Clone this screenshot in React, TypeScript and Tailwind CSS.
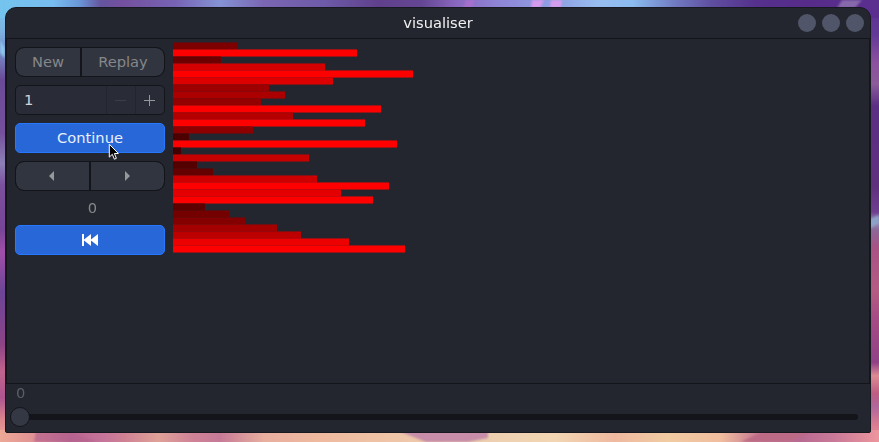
import React from "react";

const VALUES = [
  8, 23, 6, 19, 30, 20, 12, 14, 11, 26, 15, 24, 10, 2, 28, 1, 17, 3, 5, 18, 27,
  21, 25, 4, 7, 9, 13, 16, 22, 29,
];

const UNIT = 8;
const PITCH = 7;

function barColor(value: number) {
  const red = value > 22 ? 255 : 60 + value * 8;
  return `rgb(${red},0,0)`;
}

function BarChart() {
  return (
    <svg width="696" height="344" className="block">
      {VALUES.map((value, i) => (
        <rect
          key={value}
          x={0}
          y={3.45 + i * PITCH}
          width={value * UNIT}
          height={PITCH + 0.1}
          fill={barColor(value)}
        />
      ))}
    </svg>
  );
}

type Stop = [number, string];

function Gradient({ id, stops, vertical }: { id: string; stops: Stop[]; vertical?: boolean }) {
  return (
    <linearGradient id={id} x1="0" y1="0" x2={vertical ? "0" : "1"} y2={vertical ? "1" : "0"}>
      {stops.map(([offset, color]) => (
        <stop key={offset} offset={offset} stopColor={color} />
      ))}
    </linearGradient>
  );
}

function Wallpaper() {
  return (
    <svg
      className="absolute inset-0"
      width="879"
      height="442"
      viewBox="0 0 879 442"
      preserveAspectRatio="none"
    >
      <defs>
        <filter id="soft" x="-20%" y="-50%" width="140%" height="200%">
          <feGaussianBlur stdDeviation="1.2" />
        </filter>
        <Gradient
          id="top"
          stops={[
            [0, "#74c4ee"], [0.06, "#78bdf0"], [0.09, "#6a97d8"], [0.115, "#65549e"],
            [0.14, "#74509f"], [0.2, "#7763b4"], [0.25, "#8593d6"], [0.3, "#7a66b2"],
            [0.37, "#6d5aa8"], [0.43, "#60408c"], [0.48, "#654694"], [0.52, "#8a68c0"],
            [0.57, "#8f86d8"], [0.64, "#8fa4e4"], [0.68, "#98bdf0"], [0.72, "#8bbcf0"],
            [0.77, "#7078c0"], [0.81, "#5f4ea0"], [0.86, "#55308c"], [0.92, "#572b89"],
            [1, "#5a2f90"],
          ]}
        />
        <Gradient
          id="left"
          vertical
          stops={[
            [0, "#79c7ee"], [0.07, "#7cb2e2"], [0.13, "#7480bf"], [0.18, "#6a4a96"],
            [0.3, "#75509c"], [0.37, "#8c7fb8"], [0.42, "#7b509d"], [0.52, "#784596"],
            [0.57, "#a04fa8"], [0.66, "#6d4596"], [0.72, "#7c4490"], [0.78, "#8d4486"],
            [0.84, "#c0638c"], [0.9, "#ad5590"], [0.95, "#dc868e"], [1, "#eda699"],
          ]}
        />
        <Gradient
          id="right"
          vertical
          stops={[
            [0, "#5a2f90"], [0.08, "#643a98"], [0.14, "#8b509f"], [0.19, "#8b5b9a"],
            [0.24, "#5b2f84"], [0.42, "#60307f"], [0.48, "#6f3d90"], [0.502, "#9395bd"],
            [0.52, "#8c6898"], [0.56, "#a95285"], [0.66, "#b45c83"], [0.72, "#a64b85"],
            [0.82, "#914287"], [0.85, "#dc8b94"], [0.89, "#bd5d82"], [0.92, "#b0679c"],
            [0.96, "#d97c91"], [1, "#e8909a"],
          ]}
        />
        <Gradient
          id="bottom"
          stops={[
            [0, "#eda896"], [0.05, "#dd8c94"], [0.08, "#ba6691"], [0.12, "#c7759a"],
            [0.14, "#cf8094"], [0.18, "#e0a198"], [0.22, "#cf8297"], [0.25, "#c77a97"],
            [0.3, "#e8ae9f"], [0.36, "#efb99f"], [0.45, "#efc5a8"], [0.55, "#edcfb0"],
            [0.63, "#f2d6b3"], [0.7, "#efb9a0"], [0.76, "#f1cba2"], [0.82, "#f1bd9f"],
            [0.86, "#c97e92"], [0.91, "#b96a91"], [0.95, "#ca7a98"], [1, "#ee969e"],
          ]}
        />
      </defs>
      <rect width="879" height="442" fill="#604088" />
      <rect width="12" height="442" fill="url(#left)" />
      <rect x="865" width="14" height="442" fill="url(#right)" />
      <rect width="879" height="18" fill="url(#top)" />
      <rect y="430" width="879" height="12" fill="url(#bottom)" />
      <g filter="url(#soft)">
        <path d="M466 0h9l-3 8h-9z" fill="#b070d0" opacity=".7" />
        <path d="M532 0h12l-4 8h-9zM551 0h11l-1 8h-11z" fill="#e39bee" opacity=".85" />
        <path d="M842 0h20l-7 8h-18z" fill="#9a82b8" opacity=".7" />
        <path d="M0 40l5 8v10l-5-5z" fill="#8cc5ec" />
        <path d="M36 432h34l26 10H34z" fill="#b5628f" opacity=".7" />
        <path d="M396 430h92v8l-20 4h-42z" fill="#c78da9" />
        <path d="M762 432h48l-22 10h-47z" fill="#bd6b86" />
        <path d="M869 220l10-5v8l-10 6z" fill="#8ea2c7" />
      </g>
    </svg>
  );
}

const RAISED = "flex items-center justify-center bg-[#313540] text-[#868789]";

function Cursor() {
  return (
    <svg
      className="absolute left-[93px] top-[20px]"
      width="12"
      height="18"
      viewBox="0 0 12 18"
    >
      <path
        d="M1.3 1.2v12.9l3-2.8 2.1 4.9 2-.9-2-4.8h4z"
        fill="#000"
        stroke="#fff"
        strokeWidth="1"
      />
    </svg>
  );
}

function Sidebar() {
  return (
    <div className="flex w-[150px] flex-none flex-col gap-2 pt-2">
      <div className="flex h-[30px] gap-[2px] overflow-hidden rounded-[9px] border border-[#14151a] bg-[#14151a]">
        <button className={`${RAISED} w-[64px] rounded-l-[8px]`}>New</button>
        <button className={`${RAISED} flex-1 rounded-r-[8px]`}>Replay</button>
      </div>

      <div className="flex h-[30px] rounded-[5px] border border-[#14151a] bg-[#292b36] text-[#d3d4d7]">
        <div className="flex flex-1 items-center pl-2">1</div>
        <div className="flex w-[29px] items-center justify-center border-l border-[#23252e]">
          <svg width="12" height="12" viewBox="0 0 12 12">
            <path d="M0 6.5h11" stroke="#3b3d48" />
          </svg>
        </div>
        <div className="flex w-[29px] items-center justify-center border-l border-[#23252e]">
          <svg width="12" height="12" viewBox="0 0 12 12">
            <path d="M0 6.5h11M5.5 1v11" stroke="#96979b" />
          </svg>
        </div>
      </div>

      <div className="relative h-[30px]">
        <button className="flex h-[30px] w-full items-center justify-center rounded-[5px] border border-[#2777ff] bg-[#2767d7] text-[#eaf0fb]">
          Continue
        </button>
        <Cursor />
      </div>

      <div className="flex h-[30px] gap-[2px] overflow-hidden rounded-[9px] border border-[#14151a] bg-[#14151a]">
        <button className={`${RAISED} w-[73px] rounded-l-[8px] pr-[2px]`}>
          <svg width="5" height="10" viewBox="0 0 5 10">
            <path d="M5 0v10L0 5z" fill="#96979b" />
          </svg>
        </button>
        <button className={`${RAISED} flex-1 rounded-r-[8px]`}>
          <svg width="5" height="10" viewBox="0 0 5 10">
            <path d="M0 0v10l5-5z" fill="#96979b" />
          </svg>
        </button>
      </div>

      <div className="h-[18px] pl-[5px] text-center leading-[18px] text-[#85878b]">0</div>

      <button className="flex h-[30px] items-center justify-center rounded-[5px] border border-[#2777ff] bg-[#2767d7]">
        <svg width="16" height="12" viewBox="0 0 16 12">
          <path d="M0 0h2v12H0zM9 0v12L2 6.5v-1zM16 0v12L9 6.5v-1z" fill="#fff" />
        </svg>
      </button>
    </div>
  );
}

export default function App() {
  return (
    <div className="relative h-[442px] w-[879px] overflow-hidden pl-[5px] pt-[7px] font-['DejaVu_Sans',sans-serif] text-[14.67px] leading-[18px]">
      <Wallpaper />
      <div className="relative flex h-[426px] w-[866px] flex-col overflow-hidden rounded-b-[2px] rounded-t-[11px] border border-[#181920] bg-[#23262e]">
        <header className="flex h-[31px] flex-none items-center border-b border-[#14151a]">
          <div className="w-[72px]" />
          <h1 className="flex-1 text-center text-[#f0f1f2]">visualiser</h1>
          <div className="flex w-[72px] gap-1.5">
            <span className="size-[18px] rounded-full bg-[#505569]" />
            <span className="size-[18px] rounded-full bg-[#505569]" />
            <span className="size-[18px] rounded-full bg-[#505569]" />
          </div>
        </header>

        <main className="flex h-[345px] flex-none gap-2 border-x border-b border-[#14151a] pl-2">
          <Sidebar />
          <BarChart />
        </main>

        <footer className="flex flex-1 flex-col pl-[4px] pr-3">
          <div className="h-[23px] pl-[6px] text-[#5a5d68]">0</div>
          <div className="flex h-[20px] items-center">
            <div className="z-10 size-[20px] flex-none rounded-full border border-[#14151a] bg-[#343844]" />
            <div className="-ml-1 h-[6px] flex-1 rounded-r-full bg-[#14151a]" />
          </div>
        </footer>
      </div>
    </div>
  );
}
